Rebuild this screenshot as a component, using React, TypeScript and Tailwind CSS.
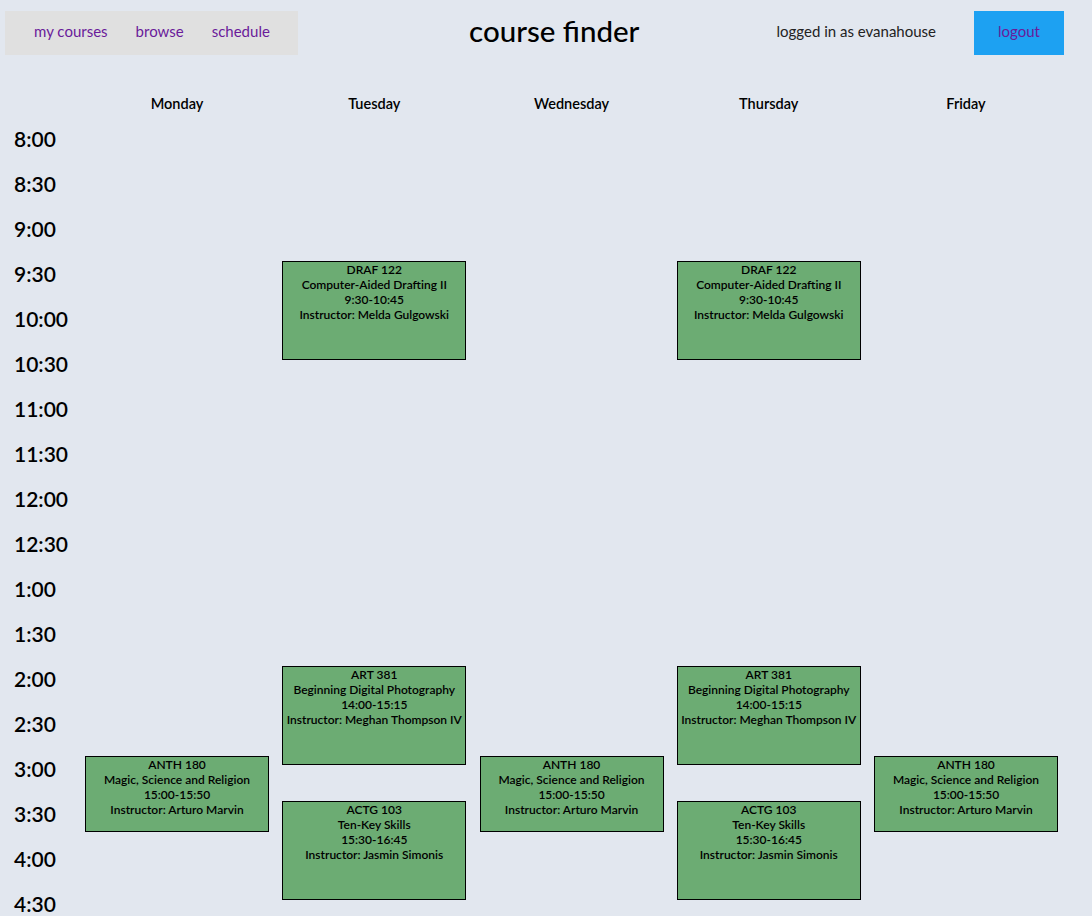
const days = ['Monday', 'Tuesday', 'Wednesday', 'Thursday', 'Friday'];

const times = [
  '8:00', '8:30', '9:00', '9:30', '10:00', '10:30', '11:00', '11:30', '12:00',
  '12:30', '1:00', '1:30', '2:00', '2:30', '3:00', '3:30', '4:00', '4:30', '5:00', '5:30',
];

interface Course {
  code: string;
  title: string;
  time: string;
  instructor: string;
  col: string;
  row: string;
  h: string;
}

const drafting = { code: 'DRAF 122', title: 'Computer-Aided Drafting II', time: '9:30-10:45', instructor: 'Melda Gulgowski' };
const photo = { code: 'ART 381', title: 'Beginning Digital Photography', time: '14:00-15:15', instructor: 'Meghan Thompson IV' };
const anth = { code: 'ANTH 180', title: 'Magic, Science and Religion', time: '15:00-15:50', instructor: 'Arturo Marvin' };
const actg = { code: 'ACTG 103', title: 'Ten-Key Skills', time: '15:30-16:45', instructor: 'Jasmin Simonis' };

const courses: Course[] = [
  { ...drafting, col: 'col-start-3', row: 'row-start-5', h: 'h-[99px]' },
  { ...drafting, col: 'col-start-5', row: 'row-start-5', h: 'h-[99px]' },
  { ...photo, col: 'col-start-3', row: 'row-start-14', h: 'h-[99px]' },
  { ...photo, col: 'col-start-5', row: 'row-start-14', h: 'h-[99px]' },
  { ...anth, col: 'col-start-2', row: 'row-start-16', h: 'h-[76px]' },
  { ...anth, col: 'col-start-4', row: 'row-start-16', h: 'h-[76px]' },
  { ...anth, col: 'col-start-6', row: 'row-start-16', h: 'h-[76px]' },
  { ...actg, col: 'col-start-3', row: 'row-start-17', h: 'h-[99px]' },
  { ...actg, col: 'col-start-5', row: 'row-start-17', h: 'h-[99px]' },
];

const rowStarts = [
  'row-start-2', 'row-start-3', 'row-start-4', 'row-start-5', 'row-start-6', 'row-start-7', 'row-start-8',
  'row-start-9', 'row-start-10', 'row-start-11', 'row-start-12', 'row-start-13', 'row-start-14',
  'row-start-15', 'row-start-16', 'row-start-17', 'row-start-18', 'row-start-19', 'row-start-20', 'row-start-21',
];

const dayCols = ['col-start-2', 'col-start-3', 'col-start-4', 'col-start-5', 'col-start-6'];

export default function App() {
  return (
    <div className="min-h-screen bg-[#e2e7ef] font-['Lato',sans-serif] text-black">
      <header className="flex items-center pt-[11px] pl-[5px] pr-[28px]">
        <nav className="flex h-[44px] w-[293px] items-center gap-[28px] bg-[#e0e0e0] pb-[3px] pl-[29px] text-[15px] text-[#6a1b9a]">
          <a>my courses</a>
          <a>browse</a>
          <a>schedule</a>
        </nav>
        <h1 className="mb-[5px] flex-1 pl-[34px] text-center text-[29.5px] font-medium leading-none">course finder</h1>
        <span className="mb-[4px] mr-[38px] text-[15px] text-[#222]">logged in as evanahouse</span>
        <button className="h-[44px] w-[90px] bg-[#1da1f2] pb-[3px] text-[15px] text-[#6a1b9a]">logout</button>
      </header>

      <div className="mt-[38px] grid grid-cols-[71.75px_repeat(5,184px)] auto-rows-[45px] grid-rows-[33px] gap-x-[13.25px]">
        {days.map((d, i) => (
          <div key={d} className={`row-start-1 text-center text-[14.5px] font-semibold ${dayCols[i]}`}>
            {d}
          </div>
        ))}
        {times.map((t, i) => (
          <div key={t} className={`col-start-1 pl-[14px] text-[21px] font-semibold leading-[26px] ${rowStarts[i]}`}>
            {t}
          </div>
        ))}
        {courses.map((c, i) => (
          <div
            key={i}
            className={`${c.col} ${c.row} ${c.h} self-start border border-black bg-[#6cac73] text-center text-[12px] font-semibold leading-[15px]`}
          >
            <div>{c.code}</div>
            <div>{c.title}</div>
            <div>{c.time}</div>
            <div>Instructor: {c.instructor}</div>
          </div>
        ))}
      </div>
    </div>
  );
}
